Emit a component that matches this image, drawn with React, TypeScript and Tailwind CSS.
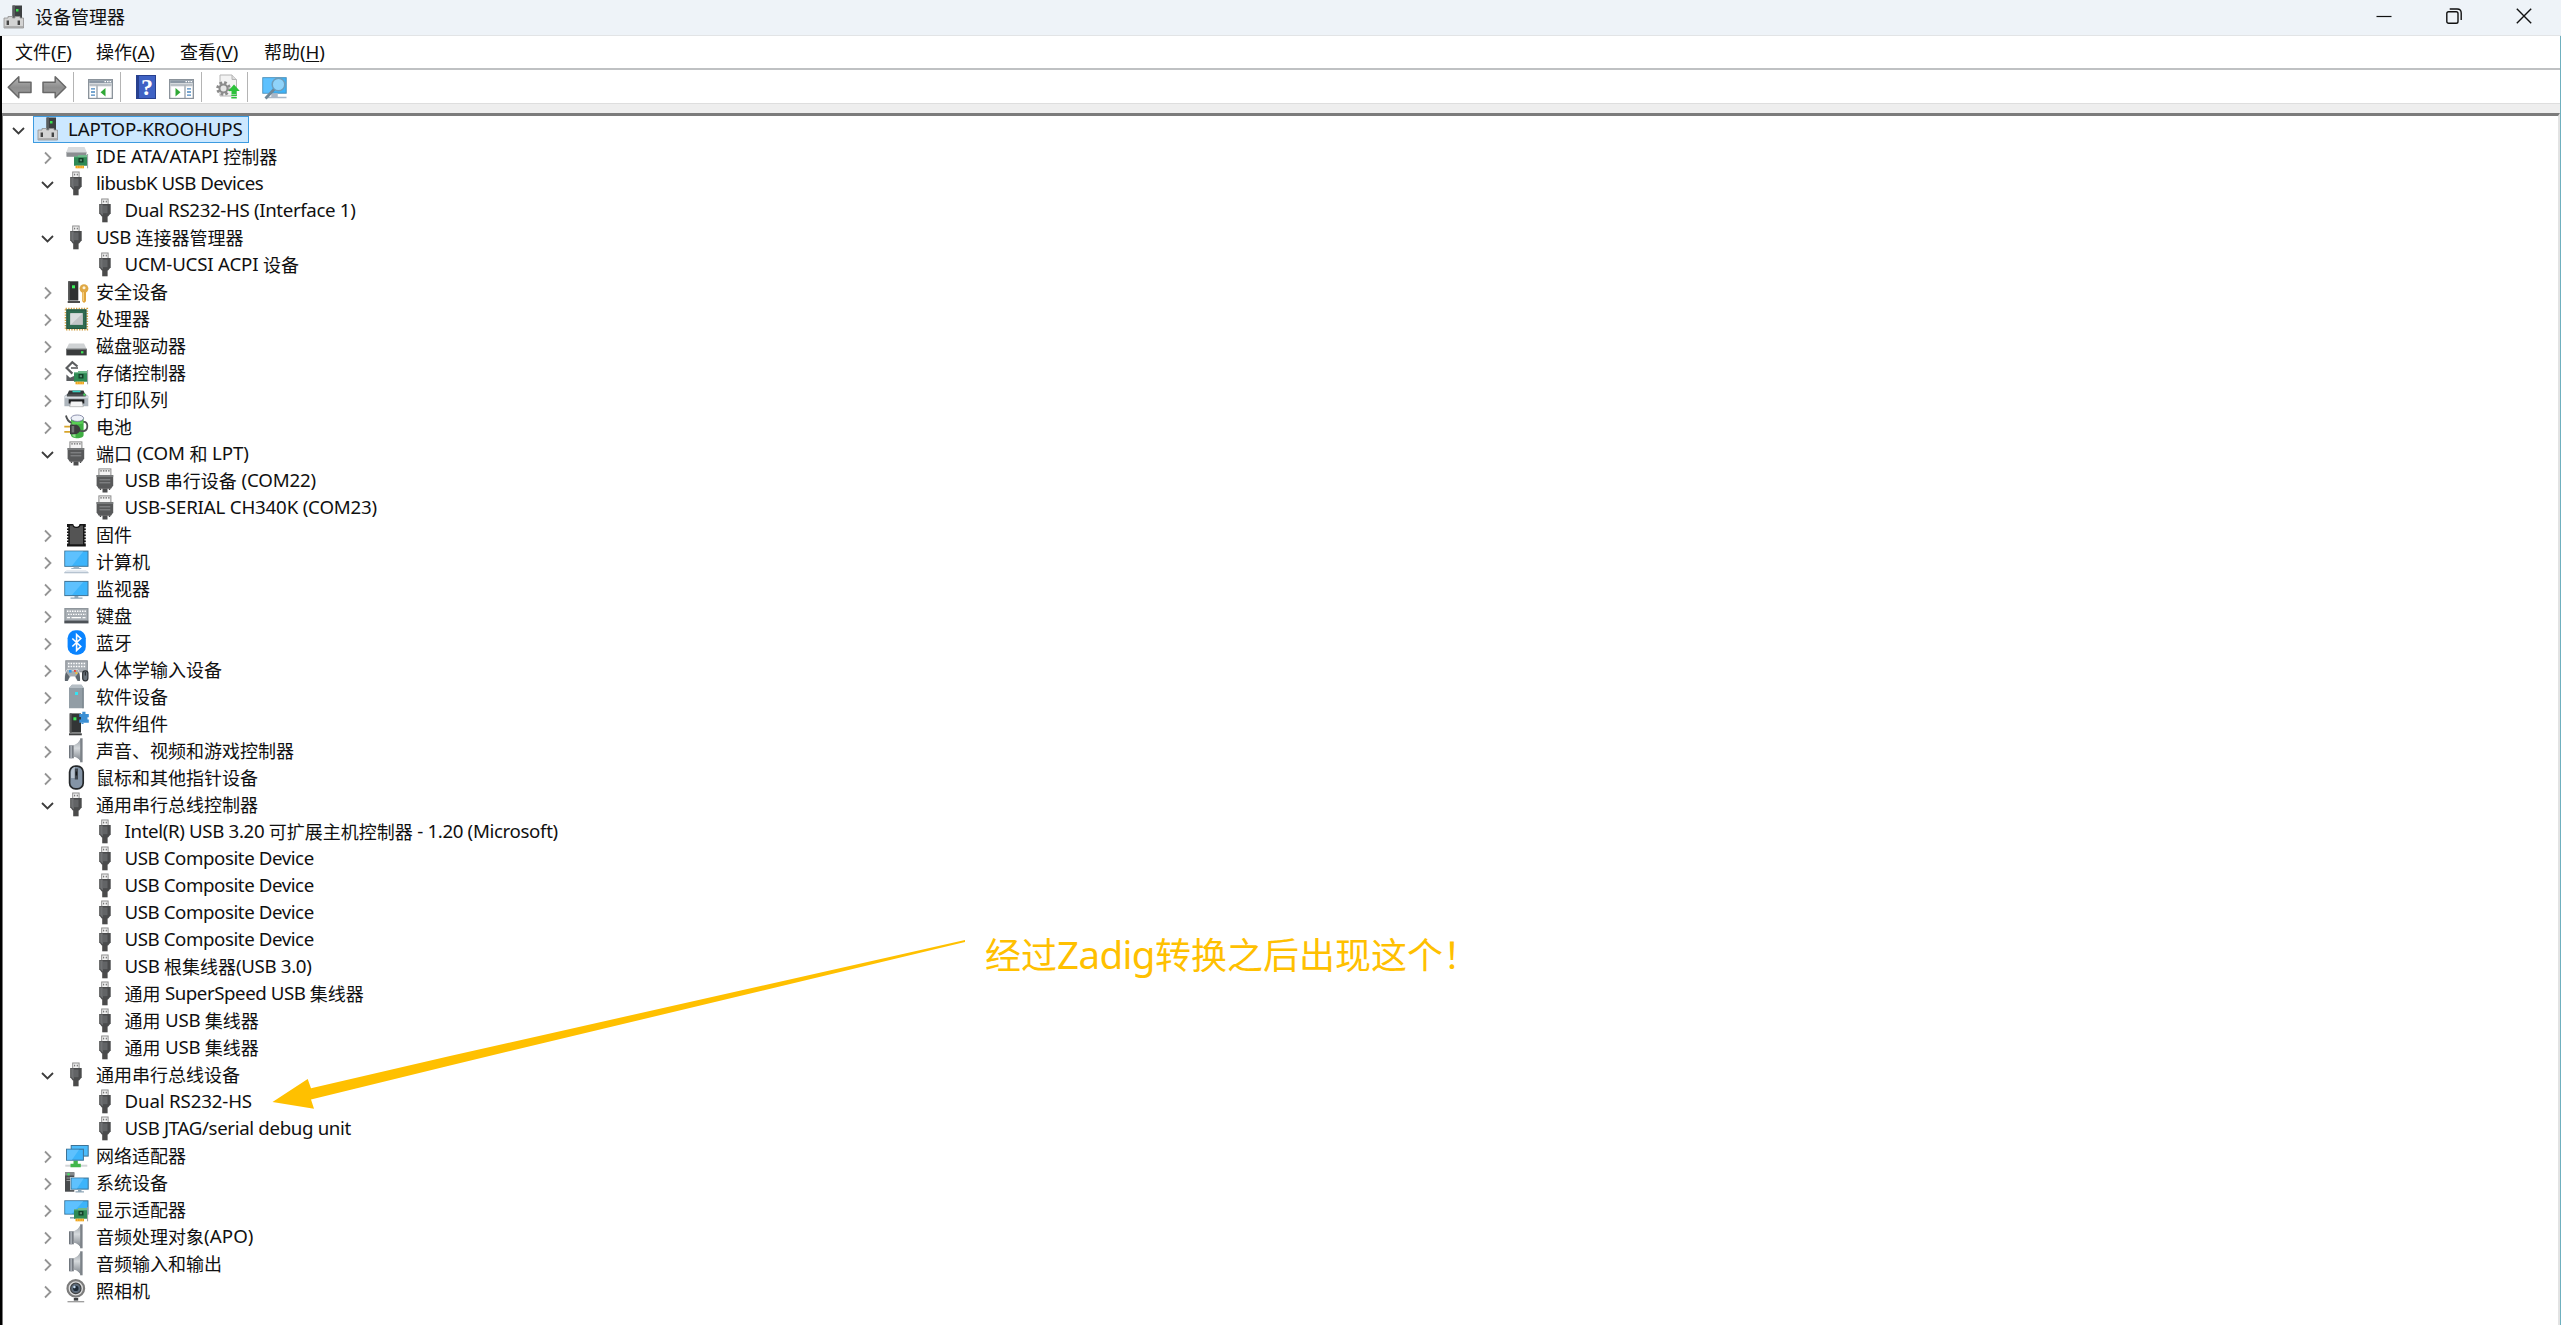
import type { ReactNode } from "react";

type IconName =
    | "root" | "ide" | "usb" | "security" | "cpu" | "disk" | "storage" | "printer" | "battery" | "port"
    | "firmware" | "computer" | "monitor" | "keyboard" | "bluetooth" | "hid" | "software" | "component"
    | "sound" | "mouse" | "network" | "system" | "display" | "camera";

type Row = { level: number; icon: IconName; label: string; open?: boolean; tracking?: string };

const rows: Row[] = [
    { level: 1, icon: "ide", label: "IDE ATA/ATAPI 控制器", tracking: "tracking-[-0.05px]" },
    { level: 1, icon: "usb", label: "libusbK USB Devices", open: true, tracking: "tracking-[-0.52px]" },
    { level: 2, icon: "usb", label: "Dual RS232-HS (Interface 1)" },
    { level: 1, icon: "usb", label: "USB 连接器管理器", open: true },
    { level: 2, icon: "usb", label: "UCM-UCSI ACPI 设备", tracking: "tracking-[-0.2px]" },
    { level: 1, icon: "security", label: "安全设备" },
    { level: 1, icon: "cpu", label: "处理器" },
    { level: 1, icon: "disk", label: "磁盘驱动器" },
    { level: 1, icon: "storage", label: "存储控制器" },
    { level: 1, icon: "printer", label: "打印队列" },
    { level: 1, icon: "battery", label: "电池" },
    { level: 1, icon: "port", label: "端口 (COM 和 LPT)", open: true, tracking: "tracking-[-0.15px]" },
    { level: 2, icon: "port", label: "USB 串行设备 (COM22)", tracking: "tracking-[-0.15px]" },
    { level: 2, icon: "port", label: "USB-SERIAL CH340K (COM23)", tracking: "tracking-[-0.18px]" },
    { level: 1, icon: "firmware", label: "固件" },
    { level: 1, icon: "computer", label: "计算机" },
    { level: 1, icon: "monitor", label: "监视器" },
    { level: 1, icon: "keyboard", label: "键盘" },
    { level: 1, icon: "bluetooth", label: "蓝牙" },
    { level: 1, icon: "hid", label: "人体学输入设备" },
    { level: 1, icon: "software", label: "软件设备" },
    { level: 1, icon: "component", label: "软件组件" },
    { level: 1, icon: "sound", label: "声音、视频和游戏控制器" },
    { level: 1, icon: "mouse", label: "鼠标和其他指针设备" },
    { level: 1, icon: "usb", label: "通用串行总线控制器", open: true },
    { level: 2, icon: "usb", label: "Intel(R) USB 3.20 可扩展主机控制器 - 1.20 (Microsoft)" },
    { level: 2, icon: "usb", label: "USB Composite Device", tracking: "tracking-[-0.43px]" },
    { level: 2, icon: "usb", label: "USB Composite Device", tracking: "tracking-[-0.43px]" },
    { level: 2, icon: "usb", label: "USB Composite Device", tracking: "tracking-[-0.43px]" },
    { level: 2, icon: "usb", label: "USB Composite Device", tracking: "tracking-[-0.43px]" },
    { level: 2, icon: "usb", label: "USB 根集线器(USB 3.0)" },
    { level: 2, icon: "usb", label: "通用 SuperSpeed USB 集线器", tracking: "tracking-[-0.45px]" },
    { level: 2, icon: "usb", label: "通用 USB 集线器", tracking: "tracking-[-0.3px]" },
    { level: 2, icon: "usb", label: "通用 USB 集线器", tracking: "tracking-[-0.3px]" },
    { level: 1, icon: "usb", label: "通用串行总线设备", open: true },
    { level: 2, icon: "usb", label: "Dual RS232-HS", tracking: "tracking-[-0.15px]" },
    { level: 2, icon: "usb", label: "USB JTAG/serial debug unit" },
    { level: 1, icon: "network", label: "网络适配器" },
    { level: 1, icon: "system", label: "系统设备" },
    { level: 1, icon: "display", label: "显示适配器" },
    { level: 1, icon: "sound", label: "音频处理对象(APO)", tracking: "tracking-[0.1px]" },
    { level: 1, icon: "sound", label: "音频输入和输出" },
    { level: 1, icon: "camera", label: "照相机" },
];

const menus = [
    { text: "文件", hotkey: "F", width: "w-[81px]" },
    { text: "操作", hotkey: "A", width: "w-[84px]" },
    { text: "查看", hotkey: "V", width: "w-[84px]" },
    { text: "帮助", hotkey: "H", width: "w-[84px]" },
];

// small PCI card reused by several icons
const card = (
    <>
        <path d="M10 12.5h4v-1.5h9v10.7H10z" fill="#2f8a55" />
        <path d="M10 12.5h4v-1.5h9v2.2H10z" fill="#6fb98b" />
        <rect x="14.5" y="14" width="5" height="4.5" fill="#123f28" />
        <rect x="15.8" y="15.2" width="2.2" height="2" fill="#5b8f74" />
        <rect x="11.5" y="21.7" width="8.5" height="2.6" fill="#f0a51c" />
        <path d="M13.6 21.7v2.6M16 21.7v2.6M18.3 21.7v2.6" stroke="#fbd27c" strokeWidth=".5" />
        <path d="M23.6 10v14.3" stroke="#9aa0a3" />
    </>
);

const icons: Record<IconName, ReactNode> = {
    root: (
        <>
            <rect x="9.5" y=".5" width="9.5" height="15" fill="#3d4042" />
            <path d="M9.5.5H12v15H9.5z" fill="#5a5d5f" />
            <rect x="13" y="4" width="2.5" height="2.5" fill="#3be04f" />
            <path d="M1 13h4v-1.5h4.500V13h2.500v-1.500h5V13h3.500v10H1z" fill="#d3d3d3" stroke="#8f8f8f" strokeWidth=".8" />
            <path d="M1.4 21.2h18.7v1.6H1.4z" fill="#a5a5a5" />
            <rect x="3.6" y="15.5" width="2.4" height="4.5" fill="#444" />
            <rect x="14.6" y="15.5" width="2.4" height="4.5" fill="#444" />
        </>
    ),
    ide: (
        <>
            <path d="M4.3 3h16.2l2 4.500v4.500H2.500V7.500z" fill="#d8dadc" />
            <path d="M2.5 8h19.800v4.800H2.500z" fill="#8b8e91" />
            <path d="M2.5 8h19.800v.9H2.500z" fill="#b4b7b9" />
            {card}
        </>
    ),
    usb: (
        <>
            <rect x="8.7" y="1" width="6.4" height="6" fill="#f2f2f2" stroke="#8e8e8e" />
            <rect x="10" y="2.7" width="1.2" height="1.7" fill="#777" />
            <rect x="12.7" y="2.7" width="1.2" height="1.7" fill="#777" />
            <rect x="9.2" y="16" width="5.4" height="8.3" fill="#4b4b4b" />
            <path d="M6.2 6h11.5v9.2l-2.6 3.3H8.8l-2.6-3.3z" fill="#4a4b4c" />
            <path d="M7.2 6.5h2.6v11L7.2 15z" fill="#707274" />
            <path d="M10 7.5h4.5v7.7H10z" fill="#626466" />
        </>
    ),
    security: (
        <>
            <rect x="4.3" y="2.3" width="10" height="19.2" fill="#2f3132" />
            <path d="M4.3 2.3h1.6v19.2H4.3z" fill="#555" />
            <rect x="3.7" y="22" width="12.3" height="2" fill="#4c4c4c" />
            <rect x="8" y="6.3" width="3" height="3" fill="#3cf05a" />
            <circle cx="20" cy="9.600" r="4.400" fill="#dfa845" />
            <circle cx="20" cy="8.800" r="1.500" fill="#fdf3da" />
            <path d="M18.200 13h3.800v9.300L20 24l-1.800-1.700z" fill="#e0a43c" />
            <path d="M19.400 13v9" stroke="#f7d485" />
        </>
    ),
    cpu: (
        <>
            <rect x="1.6" y="2.6" width="21.6" height="21" fill="none" stroke="#cf9d3c" strokeWidth="1.800" strokeDasharray="1.300 1.300" />
            <rect x="2.4" y="3.4" width="20" height="19.600" fill="#2f6b50" />
            <rect x="2.9" y="3.9" width="19" height="18.600" fill="none" stroke="#245540" />
            <rect x="6.3" y="7.3" width="12.600" height="11.600" fill="#c2c5c6" />
            <path d="M6.3 18.900V7.300h12.600z" fill="#dadcdd" />
        </>
    ),
    disk: (
        <>
            <path d="M5 10.5h15l2.7 5.5H2.3z" fill="#cfd2d4" />
            <rect x="2.3" y="15.8" width="20.4" height="6.6" fill="#3a3c3d" />
            <path d="M2.3 15.8h20.4v1H2.3z" fill="#77797b" />
            <rect x="17" y="18.2" width="2.4" height="2.2" fill="#3ee657" />
        </>
    ),
    storage: (
        <>
            <path d="M13.5 6.5 8.3 2.2 2.6 8l5.8 5.6" fill="none" stroke="#5b5d5f" strokeWidth="2.2" />
            <path d="M7 8h7" stroke="#7c7e80" strokeWidth="2" />
            <path d="M2.4 14.5 6 17.8l5-2.3V21H2.4z" fill="#5a5d60" />
            {card}
        </>
    ),
    printer: (
        <>
            <path d="M5 3.6h14.5l2.2 5H2.9z" fill="#35383a" />
            <rect x="8.5" y="3.6" width="8" height="1.7" fill="#35cfc0" />
            <path d="M.4 9 3 7h18.6l2.7 2v10.2H.4z" fill="#aeb6bd" />
            <path d="M.4 9h23.9v2.2H.4z" fill="#d8dde2" />
            <path d="M3 6.9h18.7v2.6H3z" fill="#4a4e51" />
            <rect x="19.4" y="6.6" width="2" height="2" fill="#47e35d" />
            <path d="M4.7 12.3h15.6v4.2H4.7z" fill="#1f2122" />
            <path d="M7 14.5h11l1.3 5.2H5.7z" fill="#f4f4f4" stroke="#8b8b8b" strokeWidth=".5" />
        </>
    ),
    battery: (
        <>
            <path d="M7 4v17c0 4.4 12.6 4.4 12.6 0V4z" fill="#3fae43" />
            <path d="M8.5 9v13l3 1.4V9z" fill="#8fe08c" />
            <ellipse cx="13.3" cy="4.2" rx="6.3" ry="3.2" fill="#eef1f8" stroke="#73789b" strokeWidth=".8" />
            <path d="M7 6.5c3 2 9.500 2 12.600 0v2.600c-3 1.800-9.600 1.800-12.600 0z" fill="#59cf54" />
            <path d="M2 1.500c.5 3 2.500 6 5.500 7.500M19.500 8c5-1 5 8 .5 9-2 .5-4 0-5.500-.8" fill="none" stroke="#4e5052" strokeWidth="1.800" />
            <path d="M.3 12.700h7M.3 17.800h7" stroke="#d7a52c" strokeWidth="1.800" />
            <path d="M6 10.600h4.200c3.400 0 5.600 2 6.200 4.800-.6 2.800-2.800 4.800-6.200 4.800H6z" fill="#3b3c3d" />
            <path d="M7.600 12h2.600v6.500H7.600z" fill="#717375" />
        </>
    ),
    port: (
        <>
            <rect x="5.9" y=".9" width="12" height="8" fill="#f4f4f4" stroke="#8a8a8a" />
            <path d="M7.3 2.8h1.500M9.900 2.800h1.500M12.500 2.800H14M15.100 2.800h1.500" stroke="#666" strokeWidth="1.300" />
            <path d="M3.600 7h16.600v10.500l-2.200 3.300H5.800l-2.200-3.300z" fill="#58595a" />
            <path d="M3.600 7h16.600v2H3.600z" fill="#77797a" />
            <path d="M6.500 11.800h10.800M6.500 14.800h10.800" stroke="#8d8f90" />
            <path d="M9.500 20.500h5v3.900h-5zM6.800 20.500h1.400V22H6.800zM15.800 20.500h1.400V22h-1.400z" fill="#4c4d4e" />
        </>
    ),
    firmware: (
        <>
            <path d="M3 1.900h5.200v1.800h7.600V1.900h6v22.600H3z" fill="#161616" />
            <path d="M3.600 5v17.500M21.200 5v17.500" stroke="#f5f5f5" strokeWidth="1.300" strokeDasharray="1.500 1.500" />
            <rect x="5.800" y="3.500" width="13.200" height="18.800" fill="#545454" />
            <path d="M8.800 1.500c.5 4.800 6.700 4.800 7.200 0z" fill="#fff" />
            <path d="M8.600 2c.5 4.600 7.100 4.600 7.600 0" fill="none" stroke="#111" strokeWidth="1.300" />
        </>
    ),
    computer: (
        <>
            <rect x=".8" y="2.1" width="23.2" height="15.2" fill="#3cb4fb" stroke="#3d7396" />
            <path d="M1.3 2.6h18L8 16.8H1.300z" fill="#5ec1fe" />
            <path d="M9.500 17.800h5.600v1.400H9.500zM7.300 19h10v.9h-10z" fill="#9fb4c4" />
            <path d="M2.500 21.800h19.600l2.400 1.400v1.100H.3v-1.100z" fill="#a9b7c6" />
            <path d="M2.500 21.800h19.600l2.400 1.400H.3z" fill="#dfe6ee" />
        </>
    ),
    monitor: (
        <>
            <rect x=".8" y="5.4" width="23.2" height="14.2" fill="#3cb4fb" stroke="#3d7396" />
            <path d="M1.3 5.900h18L8 19.100H1.300z" fill="#5ec1fe" />
            <path d="M10.500 20h3.800v1.500h-3.800zM6.500 21.500h12v1.200h-12z" fill="#90a7b8" />
        </>
    ),
    keyboard: (
        <>
            <rect x=".3" y="5" width="24.2" height="12.900" fill="#8f969c" />
            <rect x="1.6" y="6.3" width="21.6" height="10.700" fill="#a9afb5" />
            <path d="M3 8.200h19M4 11.400h18" stroke="#fff" strokeWidth="1.400" strokeDasharray="1.400 1.100" />
            <path d="M3 14.600h3M7.500 14.600h9.500M18.500 14.600h3" stroke="#fff" strokeWidth="1.300" />
            <rect x=".3" y="17.700" width="24.200" height="2.700" fill="#4d5257" />
        </>
    ),
    bluetooth: (
        <>
            <rect x="3.6" y=".3" width="18.2" height="24.4" rx="8" fill="#0a84ff" />
            <path d="m8.300 8.500 8.500 8-4.200 3.900V4.600l4.200 3.900-8.500 8" fill="none" stroke="#fff" strokeWidth="1.600" />
        </>
    ),
    hid: (
        <>
            <rect x="1.800" y="3.800" width="21.500" height="11" fill="#a8aeb4" stroke="#858b91" />
            <path d="M4 6.500h17.500M4 9.500h17.500" stroke="#fff" strokeWidth="1.600" strokeDasharray="1.500 1.100" />
            <path d="M3.500 12.300c3 1.300 7 1.300 10 0 2 1.500 3 8 2.600 11.700h-2.900l-2.500-4.200H6.500L4 24H.8c-.6-4 .5-10 2.700-11.700z" fill="#a3abb2" stroke="#fff" strokeWidth=".6" />
            <path d="M2 15c-1 3-1.200 6-1 9h2.600l2-4.200zM15 15c.9 3 1.200 6 1 9h-2.400l-2-4.200z" fill="#5d666e" />
            <rect x="5" y="13" width="2.600" height="2.600" fill="#2e9be8" />
            <rect x="10" y="13" width="1.900" height="1.900" fill="#e8463c" />
            <rect x="11.500" y="15.200" width="1.900" height="1.900" fill="#f2c12e" />
            <rect x="18.700" y="13.800" width="5.200" height="10" rx="2.500" fill="#6b747c" stroke="#2d3236" strokeWidth="1.200" />
            <path d="M21.300 15v3.500" stroke="#1d2022" />
        </>
    ),
    software: (
        <>
            <path d="M8 .8h9.500l2.200 3.200v20.300H5V4z" fill="#929da5" />
            <path d="M8 .8h9.500l2.200 3.200H5z" fill="#b5bec5" />
            <path d="M18.300 4h1.400v20.300h-1.400z" fill="#7b868e" />
            <rect x="11" y="8" width="3" height="3" fill="#35e3f2" />
        </>
    ),
    component: (
        <>
            <rect x="5.700" y="2.400" width="11.300" height="19.200" fill="#333536" />
            <path d="M5.700 2.400h2v19.200h-2z" fill="#555" />
            <rect x="9.400" y="6.300" width="3" height="3" fill="#3cf05a" />
            <rect x="5" y="22.300" width="12.800" height="2" fill="#3f4142" />
            <path d="M15.300 3h3V.8h3.200V3h3.300v3.200h-1.300v2.200h1.300v3.400h-9.500V8.600H17V6h-1.700z" fill="#3b8fd3" />
            <path d="M17.500 11.800h2v1.200h-2z" fill="#3b8fd3" />
        </>
    ),
    sound: (
        <>
            <defs>
                <linearGradient id="cone" x1="0" y1="0" x2="0" y2="1">
                    <stop offset="0" stopColor="#9fa5ab" />
                    <stop offset=".4" stopColor="#d6dadd" />
                    <stop offset="1" stopColor="#80868d" />
                </linearGradient>
            </defs>
            <path d="M9.300 7.500C13 6.500 15.500 3.500 17 .3v24c-1.500-3.200-4-6.200-7.700-7.200z" fill="url(#cone)" />
            <rect x="5" y="7.300" width="4.800" height="13" fill="#70767d" />
            <path d="M6.300 7.300h1.800v13H6.300z" fill="#a7adb3" />
            <path d="M9.800 7.300c3-.8 5-3 6.400-5.500v21c-1.400-2-3.400-3.500-6.400-4z" fill="url(#cone)" />
            <path d="M16.200.3h2.400v24h-2.400z" fill="#7c8288" />
        </>
    ),
    mouse: (
        <>
            <rect x="5.600" y="1.100" width="13.600" height="22.800" rx="6" fill="#8494a6" stroke="#25282b" strokeWidth="1.700" />
            <path d="M7 13V7c0-3 2-4.800 4-5v11z" fill="#b6c2cf" />
            <rect x="10.800" y="3.500" width="3.200" height="11" fill="#3d444c" />
            <rect x="11.700" y="6.500" width="1.400" height="4" fill="#15181a" />
        </>
    ),
    network: (
        <>
            <rect x="7.200" y="2.500" width="17" height="10.600" fill="#4cbcfb" stroke="#3d7396" />
            <path d="M1.300 21.700h22v2h-22z" fill="#d2d5d7" />
            <path d="M9.500 17.500h4.300v3.200h3v3.600H6.500v-3.600h3z" fill="#41b64a" />
            <rect x="2.500" y="6.200" width="16.900" height="11" fill="#3cb4fb" stroke="#3d7396" />
            <path d="M3 6.700h12L8 16.700H3z" fill="#5ec1fe" />
        </>
    ),
    system: (
        <>
            <rect x="1" y="2.300" width="9.300" height="19.400" fill="#484b4d" />
            <path d="M1 2.300h9.300v3.200H1z" fill="#85898c" />
            <rect x="3.500" y="3.300" width="2" height="2" fill="#3cf05a" />
            <path d="M2.500 8h5M2.500 10.500h4" stroke="#9a9d9f" />
            <rect x="7.200" y="8.100" width="17" height="11" fill="#3cb4fb" stroke="#e9f5fd" strokeWidth="2" />
            <rect x="7.200" y="8.100" width="17" height="11" fill="#3cb4fb" stroke="#3d7396" />
            <path d="M7.700 8.600h12L13 18.600H7.700z" fill="#5ec1fe" />
            <path d="M14 19.800h3.500v1.500H14zM11.500 21.300h8.500v1.200h-8.500z" fill="#90a7b8" />
        </>
    ),
    display: (
        <>
            <rect x=".8" y="3.800" width="23.200" height="13.300" fill="#3cb4fb" stroke="#3d7396" />
            <path d="M1.300 4.300h18L8 16.600H1.300z" fill="#5ec1fe" />
            <path d="M6 20h5v1.600H6z" fill="#90a7b8" />
            {card}
        </>
    ),
    camera: (
        <>
            <circle cx="11.800" cy="10.400" r="8.300" fill="#dcdcdc" stroke="#7c7c7c" strokeWidth="2.200" />
            <circle cx="11.800" cy="10.400" r="5.200" fill="#5f6d7c" stroke="#3f4143" strokeWidth="1.200" />
            <circle cx="11.800" cy="10.400" r="2.700" fill="#1d2834" />
            <circle cx="10.400" cy="9" r="1.200" fill="#c5dcf2" />
            <path d="M9.800 20h4.400v2.600H9.800z" fill="#3f4143" />
            <path d="M3.500 23.700h16.700" stroke="#9a9a9a" strokeWidth="1.300" />
        </>
    ),
};

function Icon({ name }: { name: IconName }) {
    return (
        <svg viewBox="0 0 24 24" className="mb-px size-6 shrink-0 overflow-visible">
            {icons[name]}
        </svg>
    );
}

function Chevron({ open }: { open?: boolean }) {
    return (
        <svg viewBox="0 0 14 14" className="size-3.5 shrink-0 overflow-visible">
            {open ? (
                <path d="M1 5 6.500 10.500 12 5" fill="none" stroke="#3c3c3c" strokeWidth="1.800" />
            ) : (
                <path d="M4 2.500 9.500 8 4 13.500" fill="none" stroke="#949494" strokeWidth="1.800" />
            )}
        </svg>
    );
}

// Latin runs are a touch larger and tighter than the Chinese ones
function Label({ text, tracking = "tracking-[-0.35px]" }: { text: string; tracking?: string }) {
    return (
        <>
            {text.split(/([\x20-\x7e]+)/).map((part, i) =>
                i % 2 ? (
                    <span key={i} className={`align-[1px] text-[18.7px] leading-none ${tracking}`}>{part}</span>
                ) : (
                    part
                ),
            )}
        </>
    );
}

function Separator() {
    return <div className="h-[30px] w-px shrink-0 bg-[#b4b4b4]" />;
}

function ToolArrow({ flip }: { flip?: boolean }) {
    return (
        <svg viewBox="0 0 25 24" className={flip ? "mt-px h-6 w-[25px] shrink-0 -scale-x-100" : "mt-px h-6 w-[25px] shrink-0"}>
            <defs>
                <linearGradient id="arrow" x1="0" y1="0" x2="0" y2="1">
                    <stop offset="0" stopColor="#b8b8b8" />
                    <stop offset=".5" stopColor="#8e8e8e" />
                    <stop offset="1" stopColor="#9c9c9c" />
                </linearGradient>
            </defs>
            <path d="M1.200 12.300 11.800 1.800v5.400h12.200v10.200H11.800v5.400z" fill="url(#arrow)" stroke="#686868" strokeWidth="1.500" strokeLinejoin="round" />
        </svg>
    );
}

function PanelIcon({ right }: { right?: boolean }) {
    return (
        <svg viewBox="0 0 25 20" className="mt-1 h-5 w-[25px] shrink-0">
            <rect x=".6" y=".6" width="23.800" height="18.800" fill="#e9ebed" stroke="#8b939b" strokeWidth="1.200" />
            <rect x="1.200" y="1.200" width="22.600" height="3" fill="#8b97a4" />
            <path d="M16.500 2.700h1.500M19 2.700h1.500M21.500 2.700H23" stroke="#fff" strokeWidth="1.200" />
            <path d="M1.500 6h22" stroke="#9aa3ac" strokeWidth="1.200" />
            {right ? (
                <>
                    <rect x="2.300" y="8" width="12.700" height="10.500" fill="#fff" />
                    <rect x="17" y="8" width="6" height="10.500" fill="#fff" />
                    <path d="m6.500 9 5 4.300-5 4.300z" fill="#2fa836" />
                    <path d="M18 9.800h4M18 13h4M18 16.200h4" stroke="#4a88c0" strokeWidth="1.300" />
                </>
            ) : (
                <>
                    <rect x="2" y="8" width="6" height="10.500" fill="#fff" />
                    <rect x="10" y="8" width="12.700" height="10.500" fill="#fff" />
                    <path d="m17.500 9-5 4.300 5 4.300z" fill="#2fa836" />
                    <path d="M3 9.800h4M3 13h4M3 16.200h4" stroke="#4a88c0" strokeWidth="1.300" />
                </>
            )}
            <path d={right ? "M16 6.500v12.500" : "M9 6.500v12.500"} stroke="#9aa3ac" strokeWidth="1.200" />
        </svg>
    );
}

function HelpIcon() {
    return (
        <div className="flex h-6 w-5 shrink-0 items-center justify-center border border-[#27408f] border-l-[3px] bg-[#3f62c4] font-['Liberation_Serif',serif] text-[24px] leading-none font-bold text-white">
            ?
        </div>
    );
}

function UpdateIcon() {
    return (
        <svg viewBox="0 0 24 25" className="h-[25px] w-6 shrink-0 overflow-visible">
            <path d="M4 1h12l4.500 4.500V22H4z" fill="#f3f3f3" stroke="#b5b5b5" />
            <path d="M16 1v4.500h4.500" fill="#ddd" stroke="#b5b5b5" />
            <circle cx="7.500" cy="14.500" r="5.800" fill="none" stroke="#8b8b8b" strokeWidth="3" strokeDasharray="2.550 2" />
            <circle cx="7.500" cy="14.500" r="4" fill="#e6e6e6" stroke="#8b8b8b" strokeWidth="2" />
            <path d="m18 10.500 5.800 6.500h-3.300v3h-5v-3h-3.300z" fill="#2cc23a" />
            <path d="M15.300 21.300h5.500M15.300 23.700h5.500" stroke="#2cc23a" strokeWidth="1.500" />
        </svg>
    );
}

function ScanIcon() {
    return (
        <svg viewBox="0 0 25 24" className="h-6 w-[25px] shrink-0 overflow-visible">
            <rect x=".8" y="1.700" width="23.400" height="15.500" fill="#3cb4fb" stroke="#4c8fb9" />
            <path d="M1.300 2.200h15L8 16.700H1.300z" fill="#5ec1fe" />
            <path d="M10 18h5v3h-5zM5 21.500h19.500" fill="#a9b7c6" stroke="#a9b7c6" strokeWidth="1.500" />
            <circle cx="16.500" cy="8.500" r="6.300" fill="#8fd3fa" stroke="#6d9dbb" strokeWidth="1.500" />
            <path d="M12 13.500 3.500 22.500" stroke="#6f8797" strokeWidth="2.800" />
        </svg>
    );
}

function TitleBar() {
    return (
        <header className="flex h-9 shrink-0 items-center border-b border-[#e2e4e6] bg-[#eef3f8] pl-[3px]">
            <svg viewBox="0 0 24 24" className="mb-px size-6 shrink-0 overflow-visible">{icons.root}</svg>
            <h1 className="ml-2 pb-px text-[18px] leading-none">设备管理器</h1>
            <div className="mr-[29px] mb-[3px] ml-auto flex items-center gap-[54px]">
                <svg viewBox="0 0 16 16" className="size-4">
                    <path d="M.5 8.500h15" stroke="#111" strokeWidth="1.200" />
                </svg>
                <svg viewBox="0 0 16 16" className="size-4 overflow-visible">
                    <rect x=".8" y="3.800" width="11.200" height="11.400" rx="1.800" fill="none" stroke="#111" strokeWidth="1.400" />
                    <path d="M3.700 1h7.500c2.600 0 4 1.400 4 4v7" fill="none" stroke="#111" strokeWidth="1.400" />
                </svg>
                <svg viewBox="0 0 16 16" className="size-4">
                    <path d="m.8.8 14.400 14.400M15.200.8.800 15.200" stroke="#111" strokeWidth="1.400" />
                </svg>
            </div>
        </header>
    );
}

export default function App() {
    return (
        <div className="relative flex h-[1325px] w-[2561px] flex-col overflow-hidden bg-white font-['Noto_Sans','Noto_Sans_CJK_SC',sans-serif] text-[18px] text-[#101010]">
            <TitleBar />

            <div className="flex min-h-0 flex-1 flex-col border-r border-l-2 border-r-[#6fb0bf] border-l-black">
                <nav className="flex h-[34px] shrink-0 items-center border-b-2 border-[#bfc1c3] pl-[13px]">
                    {menus.map((menu) => (
                        <span key={menu.text} className={`${menu.width} shrink-0 leading-none whitespace-nowrap`}>
                            {menu.text}
                            <span className="text-[18.7px] leading-none tracking-[-0.1px]">
                                (<span className="underline decoration-1 underline-offset-2">{menu.hotkey}</span>)
                            </span>
                        </span>
                    ))}
                </nav>

                <div className="flex h-[33px] shrink-0 items-center pl-[5px]">
                    <ToolArrow />
                    <div className="w-[10px]" />
                    <ToolArrow flip />
                    <div className="w-[6px]" />
                    <Separator />
                    <div className="w-[14px]" />
                    <PanelIcon />
                    <div className="w-[7px]" />
                    <Separator />
                    <div className="w-[15px]" />
                    <HelpIcon />
                    <div className="w-[13px]" />
                    <PanelIcon right />
                    <div className="w-[7px]" />
                    <Separator />
                    <div className="w-[14px]" />
                    <UpdateIcon />
                    <div className="w-[7px]" />
                    <Separator />
                    <div className="w-[14px]" />
                    <div className="pt-[3px]">
                        <ScanIcon />
                    </div>
                </div>

                <div className="h-[10px] shrink-0 border-t border-[#dedede] bg-[#eeeeee]" />

                <main className="min-h-0 flex-1 overflow-hidden border-t-[3px] border-r-2 border-l border-t-[#7b7b7b] border-r-[#e3e3e3] border-l-[#7b7b7b] leading-none whitespace-nowrap">
                    <div className="flex h-[27px] items-center pl-[9px]">
                        <Chevron open />
                        <div className="ml-[7px] flex h-[27px] w-[216px] items-center border border-[#3d9be0] bg-[#cce8ff] pl-[3px]">
                            <Icon name="root" />
                            <span className="ml-[7px]">
                                <Label text="LAPTOP-KROOHUPS" tracking="tracking-[-0.12px]" />
                            </span>
                        </div>
                    </div>
                    {rows.map((row, index) => (
                        <div key={index} className={row.level === 1 ? "flex h-[27px] items-center pl-[38px]" : "flex h-[27px] items-center pl-[89.5px]"}>
                            {row.level === 1 && (
                                <div className="mr-[9px] flex">
                                    <Chevron open={row.open} />
                                </div>
                            )}
                            <Icon name={row.icon} />
                            <span className="ml-2">
                                <Label text={row.label} tracking={row.tracking} />
                            </span>
                        </div>
                    ))}
                </main>
            </div>

            {/* annotation drawn over the tree */}
            <svg viewBox="0 0 700 180" className="pointer-events-none absolute top-[935px] left-[270px] h-[180px] w-[700px]">
                <path d="M2.500 167 37.700 144l3.300 9.300L180 121 695 5v2L180 130.500 41 164.500l3 9.200z" fill="#ffc000" />
            </svg>
            <p className="absolute top-[935px] left-[985px] text-[36px] leading-none whitespace-nowrap text-[#ffc000]">
                经过<span className="text-[38.5px] leading-none tracking-[-0.6px]">Zadig</span>转换之后出现这个！
            </p>
        </div>
    );
}
